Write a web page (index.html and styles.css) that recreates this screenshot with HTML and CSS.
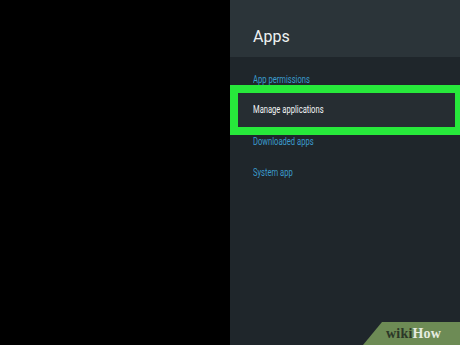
FILE: index.html
```html
<!DOCTYPE html>
<html lang="en">
<head>
  <meta charset="UTF-8">
  <meta name="viewport" content="width=device-width, initial-scale=1.0">
  <title>Apps</title>
  <link rel="stylesheet" href="styles.css">
</head>
<body>
  <div class="screen">
    <div class="blank"></div>
    <div class="panel">
      <div class="header">
        <h1>Apps</h1>
      </div>
      <ul class="menu">
        <li class="item"><span class="label">App permissions</span></li>
        <li class="item selected"><span class="label">Manage applications</span></li>
        <li class="item"><span class="label">Downloaded apps</span></li>
        <li class="item"><span class="label">System app</span></li>
      </ul>
    </div>
  </div>
  <div class="badge"><span class="wiki">wiki</span><span class="how">How</span></div>
</body>
</html>
```

FILE: styles.css
```css
body {
  margin: 0;
  padding: 0;
  width: 460px;
  height: 345px;
  overflow: hidden;
  background-color: #000;
  font-family: Roboto, 'Liberation Sans', sans-serif;
  position: relative;
}
.screen {
  display: flex;
  height: 345px;
}
.blank {
  width: 230px;
  background-color: #000;
}
.panel {
  flex: 1;
  display: flex;
  flex-direction: column;
  background-color: #1f262b;
}
.header {
  height: 57px;
  background-color: #2b3439;
  padding-left: 23px;
  box-sizing: border-box;
}
.header h1 {
  margin: 0;
  padding-top: 27px;
  font-size: 16px;
  font-weight: 400;
  line-height: 19px;
  color: #eef1f2;
}
.menu {
  list-style: none;
  margin: 0;
  padding: 6.5px 0 0 23px;
}
.item {
  height: 31px;
  line-height: 31px;
  font-size: 10px;
  color: #3b9bcb;
}
.label {
  display: inline-block;
  transform: scaleX(0.76);
  transform-origin: left center;
  white-space: nowrap;
}
.item.selected {
  height: 34px;
  line-height: 34px;
  margin: -9.5px -3px -9.5px -23px;
  padding-left: 15px;
  border: 8px solid #27e83b;
  background-color: #262d32;
  color: #f2f4f5;
}
.badge {
  position: absolute;
  right: 0;
  bottom: 0;
  width: 97px;
  height: 23px;
  background-color: #6d8b55;
  clip-path: polygon(19px 0, 100% 0, 100% 100%, 0 100%);
  box-sizing: border-box;
  padding-left: 23px;
  font-family: 'Liberation Serif', serif;
  font-weight: 700;
  font-size: 14px;
  line-height: 23px;
  letter-spacing: 0.2px;
}
.wiki {
  color: #2c3727;
}
.how {
  color: #e6ece0;
}
```
